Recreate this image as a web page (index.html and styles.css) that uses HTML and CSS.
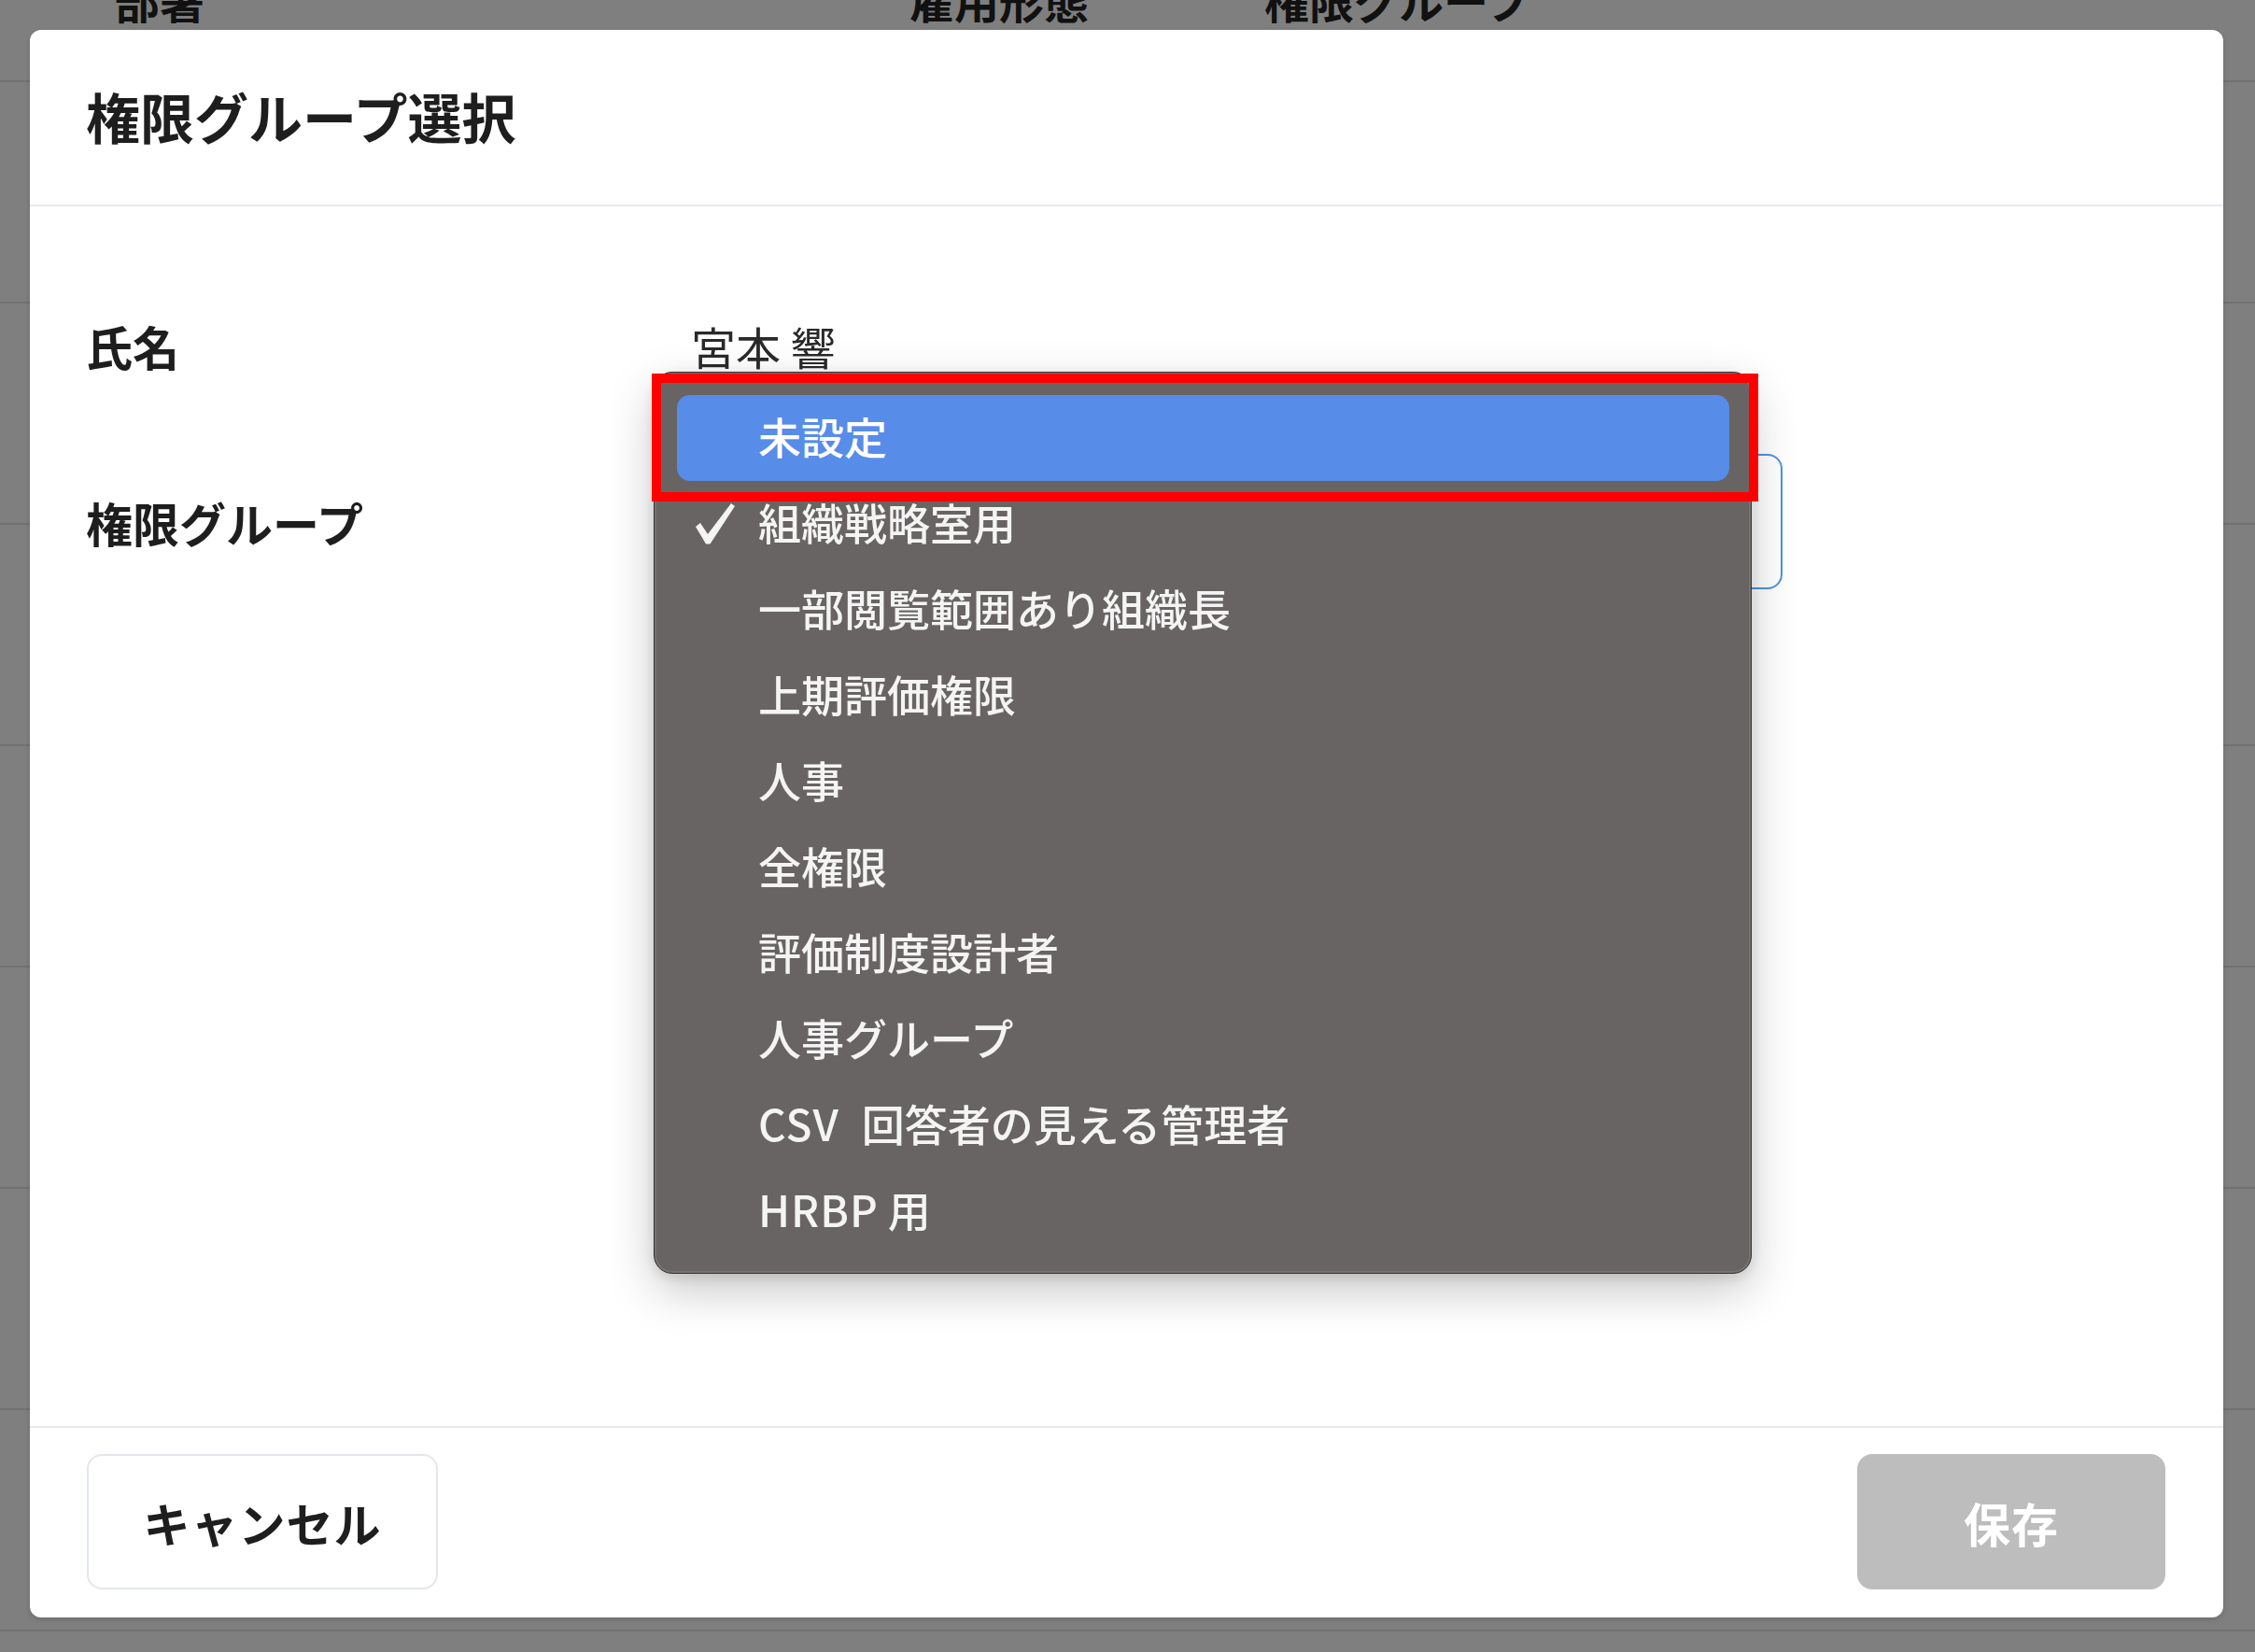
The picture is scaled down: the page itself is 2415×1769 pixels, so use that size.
FILE: index.html
```html
<!DOCTYPE html>
<html lang="ja">
<head>
<meta charset="utf-8">
<title>権限グループ選択</title>
<link rel="stylesheet" href="styles.css">
</head>
<body>
<div class="page">
  <div class="table">
    <div class="row head">
      <div class="cell c1">部署</div>
      <div class="cell c2">雇用形態</div>
      <div class="cell c3">権限グループ</div>
    </div>
    <div class="row"></div>
    <div class="row"></div>
    <div class="row"></div>
    <div class="row"></div>
    <div class="row"></div>
    <div class="row"></div>
    <div class="row"></div>
  </div>
</div>

<div class="backdrop">
  <div class="dialog">
    <div class="dialog-header">
      <h1 class="title">権限グループ選択</h1>
    </div>
    <div class="dialog-body">
      <div class="field field-name">
        <div class="label">氏名</div>
        <div class="value">宮本 響</div>
      </div>
      <div class="field field-group">
        <div class="label">権限グループ</div>
        <div class="select">組織戦略室用</div>
      </div>
    </div>
    <div class="dialog-footer">
      <button class="btn btn-cancel" type="button">キャンセル</button>
      <button class="btn btn-save" type="button" disabled>保存</button>
    </div>
  </div>
</div>

<ul class="popup">
  <li class="item active"><span class="check"></span><span class="text">未設定</span></li>
  <li class="item"><span class="check"><svg viewBox="0 0 42 44" width="42" height="44"><path d="M0 25 L5 21 L13 33 L38 0 L42 3 L15.5 43.5 L11 43.5 Z" fill="#f4f4f4"/></svg></span><span class="text">組織戦略室用</span></li>
  <li class="item"><span class="check"></span><span class="text">一部閲覧範囲あり組織長</span></li>
  <li class="item"><span class="check"></span><span class="text">上期評価権限</span></li>
  <li class="item"><span class="check"></span><span class="text">人事</span></li>
  <li class="item"><span class="check"></span><span class="text">全権限</span></li>
  <li class="item"><span class="check"></span><span class="text">評価制度設計者</span></li>
  <li class="item"><span class="check"></span><span class="text">人事グループ</span></li>
  <li class="item"><span class="check"></span><span class="text"><span class="latin latin-csv">CSV</span>回答者の見える管理者</span></li>
  <li class="item"><span class="check"></span><span class="text"><span class="latin latin-hrbp">HRBP</span>用</span></li>
</ul>

<div class="annotation"></div>
</body>
</html>
```

FILE: styles.css
```css
* {
  box-sizing: border-box;
}

html, body {
  margin: 0;
  padding: 0;
  width: 2415px;
  height: 1769px;
  overflow: hidden;
}

body {
  background: #ffffff;
  font-family: "Noto Sans CJK JP", "Noto Sans", sans-serif;
  color: #222222;
  position: relative;
}

/* background table (behind modal) */
.table {
  margin-top: -88px;
}

.row {
  height: 237px;
  border-bottom: 2px solid #e2e2e2;
}

.row.head {
  height: 176px;
  display: flex;
  align-items: center;
  padding-left: 123px;
  font-size: 48px;
  font-weight: 700;
  color: #222222;
}

.cell.c1 { width: 851px; }
.cell.c2 { width: 380px; }

/* modal */
.backdrop {
  position: fixed;
  inset: 0;
  background: rgba(0, 0, 0, 0.5);
  padding: 32px 34px 37px 32px;
  display: flex;
}

.dialog {
  flex: 1;
  display: flex;
  flex-direction: column;
  background: #ffffff;
  border-radius: 12px;
  box-shadow: 0 2px 6px rgba(0, 0, 0, 0.15);
}

.dialog-header {
  height: 189px;
  padding: 0 60px;
  display: flex;
  align-items: center;
  border-bottom: 2px solid #e6e9ef;
}

.title {
  margin: 0;
  font-size: 58px;
  font-weight: 700;
  color: #1e1e1e;
  line-height: 1;
  padding-bottom: 4px;
}

.dialog-body {
  flex: 1;
  padding: 112px 60px 0;
}

.field {
  display: grid;
  grid-template-columns: 648px 1fr;
  align-items: center;
}

.label {
  font-size: 50px;
  font-weight: 700;
  color: #1e1e1e;
}

.field-name {
  line-height: 75px;
}

.value {
  font-size: 48px;
  font-weight: 400;
  color: #2a2a2a;
}

.field-group {
  margin-top: 78px;
}

.select {
  width: 1169px;
  height: 145px;
  border: 2px solid #4a93e8;
  border-radius: 16px;
  display: flex;
  align-items: center;
  padding-left: 70px;
  font-size: 46px;
  color: #222222;
}

.dialog-footer {
  border-top: 2px solid #e6e9ef;
  padding: 28px 62px 30px 61px;
  display: flex;
  justify-content: space-between;
}

.btn {
  height: 145px;
  border-radius: 16px;
  font-family: "Noto Sans CJK JP", "Noto Sans", sans-serif;
  font-size: 50px;
  font-weight: 700;
  padding: 0;
  letter-spacing: 1px;
}

.btn-cancel {
  width: 376px;
  background: #ffffff;
  border: 2px solid #e3e7ec;
  color: #1e1e1e;
}

.btn-save {
  width: 330px;
  background: #bdbdbd;
  border: none;
  color: #ffffff;
}

/* native popup menu */
.popup {
  position: absolute;
  left: 700px;
  top: 398px;
  width: 1176px;
  height: 966px;
  margin: 0;
  padding: 24px 23px 20px 24px;
  list-style: none;
  background: #686463;
  border: 1px solid #333131;
  border-radius: 20px;
  box-shadow:
    inset 0 0 0 2px rgba(255, 255, 255, 0.10),
    0 18px 50px rgba(0, 0, 0, 0.22),
    0 4px 14px rgba(0, 0, 0, 0.12);
}

.item {
  height: 92px;
  display: flex;
  align-items: center;
  padding-left: 20px;
  padding-bottom: 6px;
  border-radius: 14px;
  color: #f4f4f4;
  font-size: 46px;
  font-weight: 500;
}

.item.active {
  background: #578ce9;
  color: #ffffff;
}

.check {
  width: 67px;
  height: 44px;
  flex: none;
  display: flex;
  align-items: center;
  margin-top: 6px;
}

.check svg {
  display: block;
}

.latin {
  letter-spacing: 1px;
}

.latin-csv {
  margin-right: 24px;
}

.latin-hrbp {
  margin-right: 10px;
}

/* red annotation frame */
.annotation {
  position: absolute;
  left: 698px;
  top: 400px;
  width: 1185px;
  height: 137px;
  border: 10px solid #ff0000;
  pointer-events: none;
}
```
